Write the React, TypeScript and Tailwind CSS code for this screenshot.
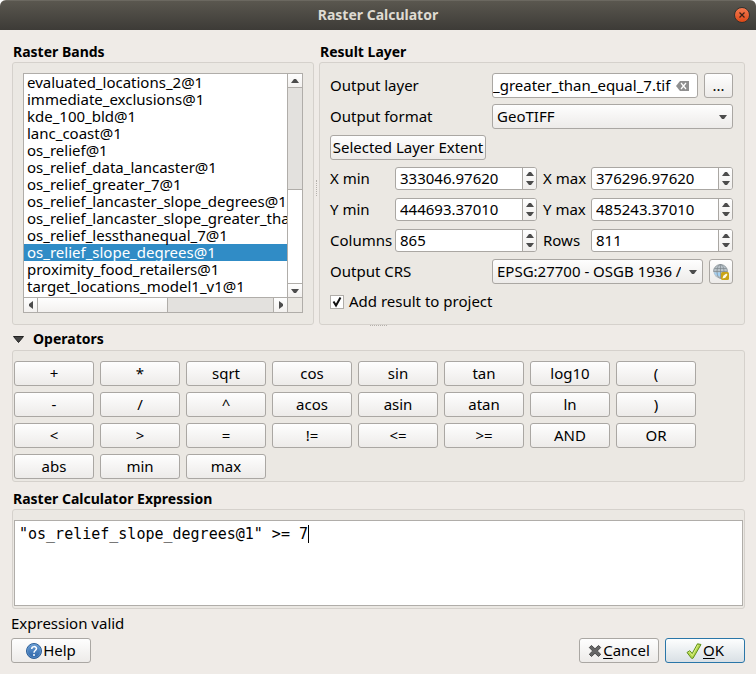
import React, { useState } from "react";

const BANDS = [
  "evaluated_locations_2@1",
  "immediate_exclusions@1",
  "kde_100_bld@1",
  "lanc_coast@1",
  "os_relief@1",
  "os_relief_data_lancaster@1",
  "os_relief_greater_7@1",
  "os_relief_lancaster_slope_degrees@1",
  "os_relief_lancaster_slope_greater_than_7@1",
  "os_relief_lessthanequal_7@1",
  "os_relief_slope_degrees@1",
  "proximity_food_retailers@1",
  "target_locations_model1_v1@1",
];

const OPERATORS = [
  "+", "*", "sqrt", "cos", "sin", "tan", "log10", "(",
  "-", "/", "^", "acos", "asin", "atan", "ln", ")",
  "<", ">", "=", "!=", "<=", ">=", "AND", "OR",
  "abs", "min", "max",
];

const BUTTON =
  "flex h-[25px] items-center justify-center rounded-[3px] border border-[#aaa7a3] bg-linear-to-b from-[#fefefe] to-[#edebe9] leading-none whitespace-nowrap";
const PANEL = "rounded-[3px] border border-[#d5d1cc] bg-[#ebe8e3]";
const FIELD = "rounded-[3px] border border-[#aaa7a3] bg-white";
const HEADING = "pl-px text-[14px] font-bold";
const ROW_LABEL = "w-[162px] shrink-0 pb-[2px]";

type Direction = "up" | "down" | "left" | "right";

function Arrow({ dir }: { dir: Direction }) {
  const d = {
    up: "M0 4h8L5 0H3z",
    down: "M0 0h8L5 4H3z",
    left: "M4 0v8L0 5V3z",
    right: "M0 0v8l4-3V3z",
  }[dir];
  const vertical = dir === "up" || dir === "down";
  return (
    <svg width={vertical ? 8 : 4} height={vertical ? 4 : 8} className="shrink-0" aria-hidden="true">
      <path d={d} fill="#4c4c4c" />
    </svg>
  );
}

function SpinBox({ id, value }: { id: string; value: string }) {
  return (
    <div className={`flex h-[23px] min-w-0 overflow-hidden ${FIELD}`}>
      <input id={id} defaultValue={value} className="h-full min-w-0 flex-1 px-[4px] pb-px leading-5 outline-none" />
      <div className="flex w-[14px] shrink-0 flex-col items-center justify-center border-l border-[#aaa7a3] bg-linear-to-b from-[#fefefe] to-[#f0eeec]">
        <button aria-label={`Increase ${id}`} className="flex h-[9px] items-center">
          <Arrow dir="up" />
        </button>
        <button aria-label={`Decrease ${id}`} className="flex h-[9px] items-center">
          <Arrow dir="down" />
        </button>
      </div>
    </div>
  );
}

function DropDown({ id, options }: { id: string; options: string[] }) {
  return (
    <div className="relative min-w-0 flex-1">
      <select
        id={id}
        className="block h-[25px] w-full appearance-none rounded-[3px] border border-[#aaa7a3] bg-linear-to-b from-[#fefefe] to-[#edebe9] pr-[21px] pl-[4px] leading-none"
      >
        {options.map((o) => (
          <option key={o}>{o}</option>
        ))}
      </select>
      <span className="pointer-events-none absolute inset-y-0 right-[6px] flex items-center">
        <Arrow dir="down" />
      </span>
    </div>
  );
}

function BandList() {
  const [band, setBand] = useState("os_relief_slope_degrees@1");
  const cap = "flex shrink-0 items-center justify-center bg-linear-to-b from-[#fefefe] to-[#f3f1ef]";
  return (
    <div className="flex h-[240px] flex-col border border-[#b0ada9] bg-white">
      <div className="flex min-h-0 flex-1">
        <div role="listbox" aria-label="Raster Bands" className="min-w-0 flex-1 overflow-hidden">
          {BANDS.map((b) => (
            <button
              key={b}
              role="option"
              aria-selected={b === band}
              onClick={() => setBand(b)}
              className="block h-[17px] w-full pb-px pl-[3px] text-left leading-4 whitespace-nowrap aria-selected:bg-[#308cc6] aria-selected:text-white"
            >
              {b}
            </button>
          ))}
        </div>
        <div className="flex w-[15px] shrink-0 flex-col border-l border-[#b0ada9] bg-[#e3e1de]">
          <button aria-label="Scroll up" className={`h-[14px] border-b border-[#b0ada9] ${cap}`}>
            <Arrow dir="up" />
          </button>
          <div className="h-[101px]" />
          <div className="flex-1 border-t border-[#b0ada9] bg-white" />
          <button aria-label="Scroll down" className={`h-[14px] border-t border-[#b0ada9] ${cap}`}>
            <Arrow dir="down" />
          </button>
        </div>
      </div>
      <div className="flex h-[15px] shrink-0 border-t border-[#b0ada9] bg-[#e3e1de]">
        <button aria-label="Scroll left" className={`w-[14px] border-r border-[#b0ada9] ${cap}`}>
          <Arrow dir="left" />
        </button>
        <div className="w-[130px] border-r border-[#b0ada9] bg-linear-to-b from-[#fefefe] to-[#f3f1ef]" />
        <div className="flex-1" />
        <button aria-label="Scroll right" className={`w-[14px] border-l border-[#b0ada9] ${cap}`}>
          <Arrow dir="right" />
        </button>
        <div className="w-[15px] border-l border-[#b0ada9] bg-[#ebe8e3]" />
      </div>
    </div>
  );
}

function GlobeIcon() {
  return (
    <svg width="16" height="16" viewBox="0 0 16 16" aria-hidden="true">
      <circle cx="7.5" cy="7.5" r="7" fill="#b9c3ca" />
      <path d="M1 8.500h13a7 6 0 0 1-13 0z" fill="#a3d0f2" />
      <g fill="none" stroke="#7d868d" strokeWidth=".7">
        <path d="M.5 7.500h14M1.500 4.500h12M7.500.5v14" />
        <ellipse cx="7.5" cy="7.5" rx="3.5" ry="7" />
        <path d="M.5 7.500a7 7 0 0 1 14 0" />
      </g>
      <rect x="8" y="8" width="8" height="8" rx="1.500" fill="#c9a316" />
      <path d="M9.500 14.500l.8-2.800 3-2.200 1.200 1.200-2.200 3z" fill="#fffbe6" />
    </svg>
  );
}

function HelpIcon() {
  return (
    <svg width="16" height="16" viewBox="0 0 16 16" aria-hidden="true">
      <defs>
        <linearGradient id="help" x1="0" y1="0" x2="0" y2="1">
          <stop offset="0" stopColor="#6b9fd6" />
          <stop offset="1" stopColor="#2a62a6" />
        </linearGradient>
      </defs>
      <circle cx="8" cy="8" r="7.5" fill="url(#help)" stroke="#2d5f98" />
      <circle cx="8" cy="8" r="6.500" fill="none" stroke="#6f9fd2" strokeWidth=".6" />
      <path d="M5.700 6c0-3.200 4.800-3 4.800-.4C10.500 7.500 8 7.500 8 9.700" fill="none" stroke="#fff" strokeWidth="1.500" />
      <circle cx="8" cy="12" r="1" fill="#fff" />
    </svg>
  );
}

function CancelIcon() {
  return (
    <svg width="14" height="14" viewBox="0 0 14 14" aria-hidden="true">
      <path
        d="M3.500 1.500L7 4.800l3.500-3.300 2.200 2L9.300 7l3.400 3.300-2.200 2.200L7 9.200l-3.500 3.300-2.200-2.200L4.700 7 1.300 3.500z"
        fill="#666"
        stroke="#4a4a4a"
        strokeLinejoin="round"
      />
    </svg>
  );
}

function OkIcon() {
  return (
    <svg width="16" height="16" viewBox="0 0 16 16" aria-hidden="true">
      <path
        d="M1 9.500l2.800-1.800 2.400 2.800L11.500.8 15 1.500 7 15.300H5.500z"
        fill="#b4d84c"
        stroke="#5f8f1c"
        strokeLinejoin="round"
      />
      <path d="M2.500 9.500l1-.6L6.300 12.500 12 2" fill="none" stroke="#dcf08c" strokeWidth=".9" />
    </svg>
  );
}

export default function App() {
  const [expression, setExpression] = useState('"os_relief_slope_degrees@1" >= 7');
  return (
    <div className="bg-white font-['Noto_Sans',sans-serif] text-[15px] leading-5 text-black">
      <div className="overflow-hidden rounded-t-[6px] bg-[#efebe7]">
        <header className="flex h-[30px] items-center border-t border-[#6b6860] bg-linear-to-b from-[#5a574f] to-[#3d3b37] px-[6px] pb-[2px]">
          <span className="w-4" />
          <h1 className="flex-1 text-center text-[14px] font-bold text-[#dfdbd2]">Raster Calculator</h1>
          <button
            aria-label="Close"
            className="flex size-4 items-center justify-center rounded-full border border-[#34322e] bg-linear-to-b from-[#f4794e] to-[#dd4814]"
          >
            <svg width="6" height="6" viewBox="0 0 6 6" aria-hidden="true">
              <path d="M.5.5l5 5M5.500.5l-5 5" stroke="#3a2016" strokeWidth="1.200" />
            </svg>
          </button>
        </header>

        <main className="px-[11px] pt-[12px] pb-[11px]">
          <div className="flex">
            <section className="w-[303px] shrink-0 pl-px">
              <h2 className={HEADING}>Raster Bands</h2>
              <div className={`h-[263px] p-[10px] ${PANEL}`}>
                <BandList />
              </div>
            </section>
            <div className="flex w-[5px] shrink-0 items-center justify-center pt-2">
              <span className="h-[16px] border-l border-dotted border-[#b5b1ac]" />
            </div>
            <section className="min-w-0 flex-1">
              <h2 className={HEADING}>Result Layer</h2>
              <div className={`flex h-[263px] flex-col gap-[6px] p-[10px] pr-[11px] ${PANEL}`}>
                <div className="flex h-[25px] items-center">
                  <label htmlFor="output-layer" className={ROW_LABEL}>
                    Output layer
                  </label>
                  <div className={`flex h-[25px] min-w-0 flex-1 items-center overflow-hidden pr-[8px] ${FIELD}`}>
                    <input
                      id="output-layer"
                      defaultValue="_greater_than_equal_7.tif"
                      className="h-full min-w-0 flex-1 pb-[2px] leading-5 outline-none"
                    />
                    <button aria-label="Clear">
                      <svg width="13" height="10" viewBox="0 0 13 10" aria-hidden="true">
                        <path d="M0 5l4-5h9v10H4z" fill="#8f8f8f" />
                        <path d="M5 2l5 6M10 2L5 8" stroke="#fff" strokeWidth="1.200" />
                      </svg>
                    </button>
                  </div>
                  <button aria-label="Browse" className={`ml-[6px] w-[29px] shrink-0 ${BUTTON}`}>
                    <span>...</span>
                  </button>
                </div>

                <div className="flex h-[25px] items-center">
                  <label htmlFor="output-format" className={ROW_LABEL}>
                    Output format
                  </label>
                  <DropDown id="output-format" options={["GeoTIFF"]} />
                </div>

                <button className={`w-[156px] ${BUTTON}`}>Selected Layer Extent</button>

                <div className="grid grid-cols-[65px_1fr_54px_1fr] items-center gap-y-[6px] *:leading-[25px]">
                  <label htmlFor="x-min">X min</label>
                  <SpinBox id="x-min" value="333046.97620" />
                  <label htmlFor="x-max" className="pl-[6px]">X max</label>
                  <SpinBox id="x-max" value="376296.97620" />
                  <label htmlFor="y-min">Y min</label>
                  <SpinBox id="y-min" value="444693.37010" />
                  <label htmlFor="y-max" className="pl-[6px]">Y max</label>
                  <SpinBox id="y-max" value="485243.37010" />
                  <label htmlFor="columns">Columns</label>
                  <SpinBox id="columns" value="865" />
                  <label htmlFor="rows" className="pl-[6px]">Rows</label>
                  <SpinBox id="rows" value="811" />
                </div>

                <div className="flex h-[25px] items-center">
                  <label htmlFor="output-crs" className={ROW_LABEL}>
                    Output CRS
                  </label>
                  <DropDown id="output-crs" options={["EPSG:27700 - OSGB 1936 / British National Grid"]} />
                  <button aria-label="Select CRS" className={`ml-[6px] w-[24px] shrink-0 ${BUTTON}`}>
                    <GlobeIcon />
                  </button>
                </div>

                <label className="flex h-[24px] items-center gap-[5px]">
                  <span className="relative flex">
                    <input
                      type="checkbox"
                      defaultChecked
                      className="peer size-[14px] appearance-none border border-[#b0ada9] bg-white"
                    />
                    <svg
                      width="14"
                      height="14"
                      viewBox="0 0 14 14"
                      className="pointer-events-none absolute inset-0 hidden peer-checked:block"
                      aria-hidden="true"
                    >
                      <path d="M3.500 6.500l2.500 4 4.500-8" fill="none" stroke="#111" strokeWidth="2" />
                    </svg>
                  </span>
                  <span className="pb-[2px]">Add result to project</span>
                </label>
              </div>
            </section>
          </div>

          <div className="flex h-[4px] justify-center">
            <span className="w-[17px] border-t border-dotted border-[#b5b1ac]" />
          </div>

          <section className="pl-px">
            <h2 className={`flex items-center gap-[9px] ${HEADING}`}>
              <svg width="11" height="7" viewBox="0 0 11 7" aria-hidden="true">
                <path d="M.5.5h10l-5 6z" fill="#444" stroke="#222" strokeLinejoin="round" />
              </svg>
              Operators
            </h2>
            <div className={`mt-px grid h-[132px] grid-cols-[repeat(8,80px)] content-start gap-[6px] px-px pt-[10px] ${PANEL}`}>
              {OPERATORS.map((op) => (
                <button key={op} className={BUTTON}>
                  {op}
                </button>
              ))}
            </div>
          </section>

          <section className="mt-[7px] pl-px">
            <h2 className={HEADING}>
              <label htmlFor="expression">Raster Calculator Expression</label>
            </h2>
            <div className={`px-px pt-[10px] pb-[2px] ${PANEL}`}>
              <div className="relative">
                <textarea
                  id="expression"
                  value={expression}
                  spellCheck={false}
                  onChange={(e) => setExpression(e.target.value)}
                  className="block h-[86px] w-full resize-none border border-[#b0ada9] bg-white px-[4px] py-[4px] font-['DejaVu_Sans_Mono',monospace] text-[15px] leading-[18px] outline-none"
                />
                <span className="absolute top-[5px] left-[294px] h-[18px] w-px bg-black" />
              </div>
            </div>
          </section>

          <p className="mt-[4px]">Expression valid</p>
          <footer className="mt-[5px] flex gap-[6px]">
            <button className={`w-[80px] ${BUTTON}`}>
              <HelpIcon />
              <span className="ml-px">Help</span>
            </button>
            <span className="flex-1" />
            <button className={`w-[80px] ${BUTTON}`}>
              <CancelIcon />
              <span className="ml-px">
                <u className="underline-offset-2">C</u>ancel
              </span>
            </button>
            <button className="flex h-[25px] w-[80px] items-center justify-center rounded-[3px] border border-[#2a76a8] bg-linear-to-b from-[#fdfefe] to-[#d9e0e5] leading-none">
              <OkIcon />
              <span className="ml-px">
                <u className="underline-offset-2">O</u>K
              </span>
            </button>
          </footer>
        </main>
      </div>
    </div>
  );
}
